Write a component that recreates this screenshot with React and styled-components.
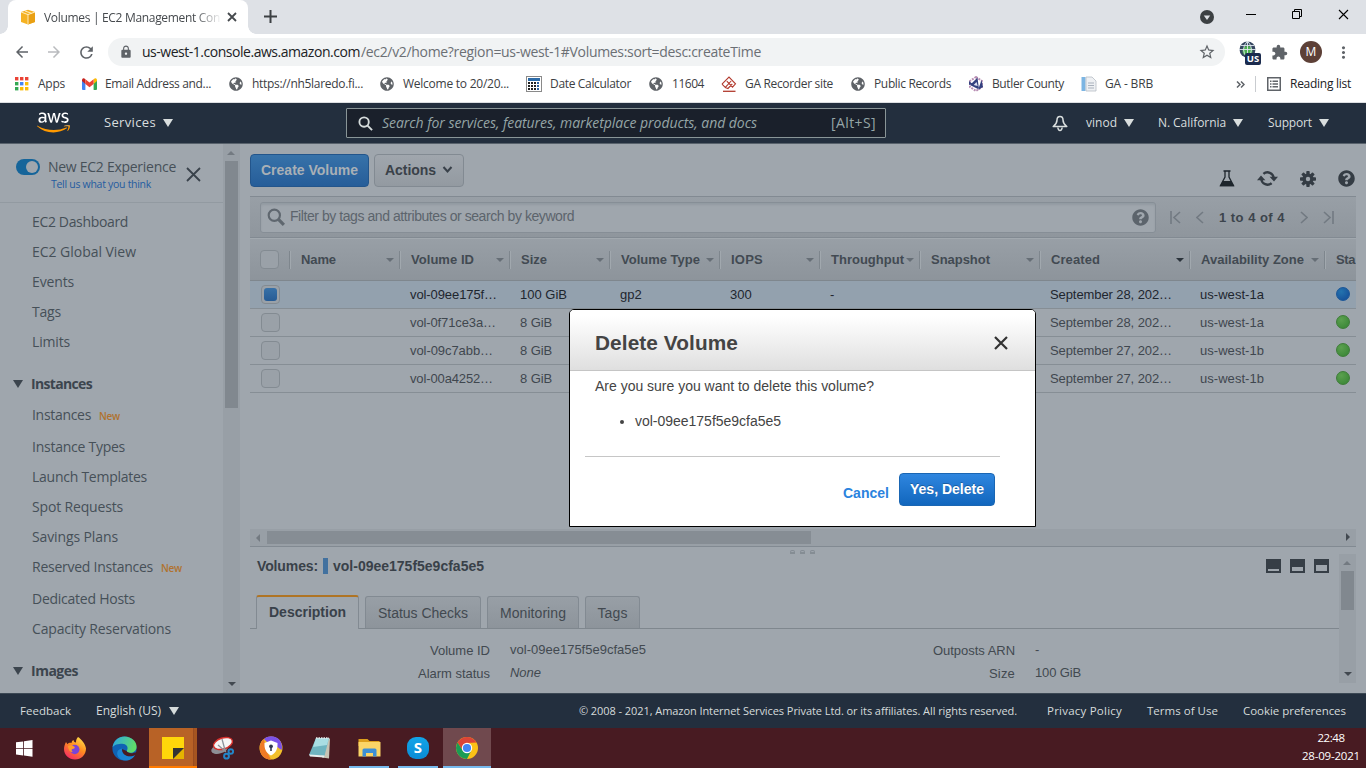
import React, { useLayoutEffect, useRef, useState } from "react";
import styled, { createGlobalStyle } from "styled-components";
import { MdArrowBack, MdArrowForward, MdRefresh, MdLock, MdStarBorder, MdExtension, MdMoreVert } from "react-icons/md";
import { FaAws, FaGlobeAmericas, FaQuestionCircle } from "react-icons/fa";

const ui = `"Open Sans", "Noto Sans", sans-serif`;
const arial = `"Liberation Sans", Arial, sans-serif`;

const Global = createGlobalStyle`
  * { box-sizing: border-box; }
  body { margin: 0; overflow: hidden; background: #9fa6ad; }
  svg { display: block; flex: none; }
`;

/* Label whose tracking is adjusted so that the text takes a given width. */
const LabelBox = styled.span`
  display: inline-block;
  flex: none;
  white-space: pre;
`;
function Label({ w, children, className }) {
  const ref = useRef(null);
  const [tracking, setTracking] = useState(0);
  useLayoutEffect(() => {
    const natural = ref.current.getBoundingClientRect().width;
    if (w) setTracking((w - natural) / String(children).length);
  }, []);
  return (
    <LabelBox ref={ref} className={className} style={{ letterSpacing: `${tracking}px` }}>
      {children}
    </LabelBox>
  );
}

const Screen = styled.div`
  width: 1366px;
  height: 768px;
  display: flex;
  flex-direction: column;
  overflow: hidden;
  position: relative;
`;

/* ---------- browser chrome ---------- */
const TabStrip = styled.div`
  height: 34px;
  flex: none;
  background: #dee1e6;
  display: flex;
  padding-left: 8px;
  font: 12px ${ui};
  color: #45494d;
`;
const Tab = styled.div`
  width: 240px;
  background: #fff;
  border-radius: 8px 8px 0 0;
  display: flex;
  align-items: center;
  padding: 0 9px 0 12px;
  position: relative;
  &::before, &::after {
    content: "";
    position: absolute;
    bottom: 0;
    width: 8px;
    height: 8px;
  }
  &::before { left: -8px; background: radial-gradient(circle at 0 0, #dee1e6 7.5px, #fff 8px); }
  &::after { right: -8px; background: radial-gradient(circle at 100% 0, #dee1e6 7.5px, #fff 8px); }
`;
const TabTitle = styled.div`
  width: 176px;
  margin: 0 7px 0 8px;
  overflow: hidden;
  mask-image: linear-gradient(90deg, #000 150px, transparent 178px);
`;
const NewTab = styled.div`
  padding: 10px 0 0 16px;
`;
const WindowControls = styled.div`
  margin-left: auto;
  display: flex;
  align-items: flex-start;
  padding-right: 17px;
`;
const ControlIcon = styled.div`
  margin-left: ${(p) => p.$gap}px;
  padding-top: ${(p) => p.$top}px;
`;

const Toolbar = styled.div`
  height: 36px;
  flex: none;
  background: #fff;
  display: flex;
  align-items: center;
  padding: 0 13px;
  color: #5f6368;
`;
const NavButtons = styled.div`
  display: flex;
  gap: 14px;
  width: 95px;
  & svg:nth-child(2) { color: #b9bbbe; }
`;
const Omnibox = styled.div`
  width: 1118px;
  height: 28px;
  border-radius: 14px;
  background: #f1f3f4;
  display: flex;
  align-items: center;
  padding: 0 9px 0 11px;
  font: 14px ${ui};
  & > svg:last-child { margin-left: auto; }
  & > span { padding-bottom: 2px; }
`;
const Host = styled(Label)`
  color: #202124;
  margin-left: 9px;
`;
const Path = styled(Label)`
  color: #6b6f74;
  margin-left: 1px;
`;
const Extensions = styled.div`
  display: flex;
  align-items: center;
  margin-left: 14px;
`;
const GlobeExt = styled.div`
  position: relative;
  width: 22px;
  height: 22px;
  margin-right: 10px;
`;
const GlobeBadge = styled.span`
  position: absolute;
  left: 6px;
  top: 12px;
  width: 16px;
  height: 12px;
  border-radius: 2px;
  background: #1b2b4e;
  color: #fff;
  text-align: center;
  font: bold 9.5px/12px ${ui};
`;
const Avatar = styled.div`
  width: 22px;
  height: 22px;
  border-radius: 50%;
  background: #5d4037;
  color: #fff;
  font: 12px/22px ${ui};
  text-align: center;
  margin: 0 12px 0 12px;
`;

const BookmarkBar = styled.div`
  height: 33px;
  flex: none;
  background: #fff;
  border-bottom: 1px solid #dcdfe2;
  display: flex;
  align-items: center;
  padding: 0 15px 4px 14px;
  font: 12px ${ui};
  color: #3c4043;
  & span { padding-bottom: 1px; }
`;
const Bookmark = styled.div`
  width: ${(p) => p.$w}px;
  display: flex;
  align-items: center;
  gap: 8px;
  flex: none;
`;
const BookmarkIcon = styled.div`
  width: 16px;
  height: 16px;
  display: flex;
  align-items: center;
  justify-content: center;
  color: #5f6368;
`;
const BookmarkEnd = styled.div`
  margin-left: auto;
  display: flex;
  align-items: center;
`;
const Divider = styled.div`
  width: 1px;
  height: 16px;
  background: #c9ccd0;
  margin: 0 11px 0 10px;
`;
const ReadingList = styled(Label)`
  color: #202124;
  margin-left: 9px;
`;

/* ---------- aws navigation ---------- */
const AwsNav = styled.div`
  height: 41px;
  flex: none;
  background: #232f3e;
  border-bottom: 1px solid #58626c;
  display: flex;
  align-items: center;
  padding-left: 37px;
  color: #d9dede;
  font: 500 12px ${ui};
`;
const LogoBox = styled.div`
  width: 34px;
  height: 28px;
  margin-right: 33px;
  display: grid;
  & > svg { grid-area: 1 / 1; width: 33px; height: 27px; color: #fff; clip-path: inset(0 0 39% 0); }
  & > svg:last-child { color: #ff9900; clip-path: inset(61% 0 0 0); }
`;
const NavItem = styled.div`
  display: flex;
  align-items: center;
  gap: ${(p) => p.$gap || 7}px;
  margin-right: ${(p) => p.$mr || 0}px;
  font-size: ${(p) => p.$size || 12}px;
  & > span { padding-bottom: 2px; }
`;
const Triangle = styled.i`
  border: solid transparent;
  border-width: ${(p) => p.$h || 8}px ${(p) => p.$w || 5}px 0;
  border-top-color: currentColor;
  flex: none;
`;
const AwsSearch = styled.div`
  width: 540px;
  height: 30px;
  margin-left: 173px;
  background: #1a202b;
  border: 1px solid #899597;
  border-radius: 1px;
  display: flex;
  align-items: center;
  padding: 0 9px 0 11px;
  font: 14px ${ui};
  color: #95a5a6;
  & > span { padding-bottom: 2px; }
`;
const Hint = styled(Label)`
  font-style: italic;
  margin-left: 9px;
`;
const Shortcut = styled(Label)`
  margin-left: auto;
`;
const NavRight = styled.div`
  margin-left: auto;
  padding-right: 37px;
  display: flex;
  align-items: center;
`;

/* ---------- workspace ---------- */
const Workspace = styled.div`
  height: 549px;
  flex: none;
  display: flex;
  background: #9fa6ad;
  color: #424950;
`;
const Sidebar = styled.div`
  width: 223px;
  flex: none;
  overflow: hidden;
  font: 14px ${ui};
  color: #465058;
`;
const Experience = styled.div`
  height: 59px;
  border-bottom: 1px solid #929aa1;
  display: flex;
  padding: 13px 0 0 16px;
`;
const Toggle = styled.div`
  width: 24px;
  height: 16px;
  border-radius: 8px;
  background: #16659a;
  padding: 2px;
  margin-top: 2px;
  &::after {
    content: "";
    display: block;
    width: 12px;
    height: 12px;
    margin-left: 8px;
    border-radius: 50%;
    background: #9fa6ad;
  }
`;
const ExperienceText = styled.div`
  display: flex;
  flex-direction: column;
  align-items: flex-start;
  margin-left: 8px;
  width: 138px;
  line-height: 20px;
`;
const Feedback = styled(Label)`
  font-size: 10.5px;
  line-height: 15px;
  color: #255ca0;
  margin-left: 3px;
`;
const SideList = styled.div`
  padding-top: 3px;
`;
const SideItem = styled.div`
  height: ${(p) => (p.$tall ? 32 : 30)}px;
  display: flex;
  align-items: center;
  padding: 0 0 ${(p) => (p.$tall ? 2 : 0)}px 32px;
`;
const SideNew = styled(Label)`
  color: #b0722f;
  font-size: 10px;
  font-weight: 600;
  margin: 3px 0 0 8px;
`;
const SideSection = styled.div`
  height: 43px;
  padding: 12px 0 0 13px;
  display: flex;
  align-items: center;
  gap: 8px;
  font-weight: 700;
  color: #3c454e;
`;
const VScroll = styled.div`
  width: 17px;
  flex: none;
  height: ${(p) => p.$h}px;
  background: #989fa6;
  display: flex;
  flex-direction: column;
  align-items: center;
`;
const VThumb = styled.div`
  width: 13px;
  height: ${(p) => p.$h}px;
  background: #81888f;
`;
const ScrollArrow = styled.div`
  width: 17px;
  height: 17px;
  display: flex;
  align-items: center;
  justify-content: center;
  margin-top: ${(p) => (p.$end ? "auto" : 0)};
  color: ${(p) => (p.$dim ? "#737a81" : "#424950")};
  transform: rotate(${(p) => p.$turn || 0}deg);
  ${(p) => (p.$end || p.$turn === 180) && "padding-bottom: 2px;"}
`;
const Main = styled.div`
  width: 1126px;
  padding: 0 10px;
  display: flex;
  flex-direction: column;
  font: 14px ${arial};
`;
const ActionBar = styled.div`
  height: 52px;
  flex: none;
  padding-top: 10px;
  display: flex;
  align-items: flex-start;
`;
const Button = styled.div`
  height: 33px;
  border-radius: 4px;
  display: flex;
  align-items: center;
  justify-content: center;
  width: ${(p) => p.$w}px;
  font: bold 14px ${arial};
  border: 1px solid #828a92;
  background: linear-gradient(#a0a6ad, #939aa1);
  color: #3a4149;
  margin-right: 5px;
  padding-bottom: 2px;
  gap: 6px;
`;
const CreateButton = styled(Button)`
  border-color: #23558b;
  background: linear-gradient(#3772a9, #265d99);
  color: #a9b0b6;
`;
const ActionIcons = styled.div`
  margin-left: auto;
  display: flex;
  align-items: center;
  padding: 16px 1px 0 0;
  & > * + * { margin-left: 22px; }
`;
const FilterBar = styled.div`
  height: 42px;
  flex: none;
  border-top: 1px solid #828a92;
  border-bottom: 1px solid #828a92;
  background: linear-gradient(#989fa6, #8f969d);
  display: flex;
  align-items: center;
  padding-left: 10px;
`;
const FilterField = styled.div`
  width: 896px;
  height: 31px;
  border: 1px solid #868e96;
  border-radius: 3px;
  background: #9fa6ad;
  box-shadow: inset 0 2px 2px rgba(60, 70, 80, 0.12);
  display: flex;
  align-items: center;
  padding: 0 6px;
  color: #5c646c;
  & > svg:last-child { margin-left: auto; }
  & span { padding-bottom: 2px; }
`;
const Pager = styled.div`
  display: flex;
  align-items: center;
  gap: 15px;
  margin-left: 14px;
  font-weight: bold;
  font-size: 13px;
  color: #3c444c;
`;
const HeadRow = styled.div`
  height: 43px;
  flex: none;
  border-top: 1px solid #a2a9af;
  border-bottom: 1px solid #7f878e;
  background: linear-gradient(#989fa6, #8d949b);
  display: flex;
  align-items: center;
  font: bold 13px ${arial};
  color: #424a52;
  overflow: hidden;
`;
const HeadCell = styled.div`
  width: ${(p) => p.$w}px;
  height: 18px;
  flex: none;
  display: flex;
  align-items: center;
  justify-content: space-between;
  padding: 0 5px 0 11px;
  border-left: 1px solid #7e868d;
  box-shadow: inset 1px 0 #a1a8ae;
  & i { color: ${(p) => (p.$on ? "#2b333b" : "#666e76")}; margin-top: 1px; }
`;
const CheckCell = styled.div`
  width: ${(p) => p.$w || 40}px;
  flex: none;
  padding-left: ${(p) => p.$pl || 11}px;
`;
const Check = styled.div`
  width: 19px;
  height: 19px;
  border: 1px solid #838b92;
  border-radius: 4px;
  background: #9aa1a8;
  padding: 2px;
  &::after {
    content: "";
    display: ${(p) => (p.$on ? "block" : "none")};
    height: 13px;
    border-radius: 3px;
    background: linear-gradient(#3871a7, #265b95);
  }
`;
const Row = styled.div`
  height: 28px;
  flex: none;
  display: flex;
  align-items: center;
  border-bottom: 1px solid #868e95;
  background: ${(p) => (p.$on ? "#93a1ae" : "transparent")};
  color: ${(p) => (p.$on ? "#1e262e" : "#3f474f")};
  font-size: 13px;
  overflow: hidden;
`;
const Cell = styled.div`
  width: ${(p) => p.$w}px;
  flex: none;
  padding-left: 10px;
  white-space: pre;
`;
const Status = styled.div`
  width: 14px;
  height: 14px;
  border-radius: 50%;
  margin-top: -1px;
  background: ${(p) => (p.$blue ? "radial-gradient(circle at 35% 30%, #2473ae, #17549c 75%)" : "radial-gradient(circle at 35% 30%, #5ba04f, #3f8a3a 75%)")};
  border: 1px solid ${(p) => (p.$blue ? "#1b5798" : "#3d7c38")};
`;
const HScroll = styled.div`
  height: 18px;
  flex: none;
  margin-top: auto;
  border-bottom: 1px solid #828a92;
  background: #989fa6;
  display: flex;
  align-items: center;
`;
const HThumb = styled.div`
  width: 544px;
  height: 13px;
  background: #868d94;
  margin-right: auto;
`;
const Details = styled.div`
  height: 146px;
  flex: none;
  display: flex;
  position: relative;
`;
const Grip = styled.div`
  position: absolute;
  left: 540px;
  top: 3px;
  display: flex;
  gap: 5px;
  & i { width: 5px; height: 4px; border: 1px solid #858d94; border-bottom-width: 2px; border-radius: 2px 2px 0 0; }
`;
const DetailBody = styled.div`
  width: 1089px;
  padding-top: 7px;
`;
const DetailTitle = styled.div`
  display: flex;
  align-items: center;
  height: 24px;
  padding-left: 7px;
  font: bold 14px ${arial};
  color: #394149;
`;
const Mark = styled.div`
  width: 5px;
  height: 16px;
  background: #42719f;
  margin: 0 5px;
`;
const PaneIcons = styled.div`
  display: flex;
  gap: 9px;
  margin-left: auto;
  padding-right: 10px;
`;
const Pane = styled.div`
  width: 15px;
  height: 14px;
  border: 2px solid #363e46;
  border-top-width: ${(p) => p.$top}px;
`;
const Tabs = styled.div`
  display: flex;
  align-items: flex-end;
  height: 51px;
  padding: 0 0 0 6px;
  border-bottom: 1px solid #7f878e;
  gap: 6px;
`;
const DetailTab = styled.div`
  width: ${(p) => p.$w}px;
  height: 32px;
  border: 1px solid #828a92;
  border-bottom: 0;
  border-radius: 3px 3px 0 0;
  background: linear-gradient(#989fa6, #8d949b);
  display: flex;
  align-items: center;
  justify-content: center;
`;
const ActiveTab = styled(DetailTab)`
  height: 34px;
  margin-bottom: -1px;
  border-top: 2px solid #af7424;
  background: #9fa6ad;
  font-weight: bold;
  color: #39414a;
  padding-bottom: 2px;
`;
const FactColumn = styled.div`
  display: grid;
  grid-template-columns: ${(p) => p.$key}px 1fr;
  column-gap: 20px;
  grid-auto-rows: 23px;
  & > :nth-child(odd) { justify-self: end; padding-top: 1px; }
  & > :nth-child(even) { justify-self: start; }
  & > * { line-height: 18px; }
`;
const FactGrid = styled.div`
  display: flex;
  padding-top: 12px;
  font-size: 13px;
  & > :first-child { width: 505px; }
`;
const Italic = styled(Label)`
  font-style: italic;
`;

/* ---------- dialog ---------- */
const Dialog = styled.div`
  position: absolute;
  left: 569px;
  top: 309px;
  width: 467px;
  height: 218px;
  border: 1px solid #000;
  border-radius: 5px 5px 0 0;
  background: #fff;
  font: 14px ${arial};
  color: #444;
`;
const DialogHead = styled.div`
  height: 61px;
  border-bottom: 1px solid #c5c5c5;
  border-radius: 4px 4px 0 0;
  background: linear-gradient(#fff 10%, #dfdfdf);
  display: flex;
  align-items: center;
  justify-content: space-between;
  padding: 6px 27px 0 25px;
  font: bold 20.8px ${arial};
`;
const Question = styled.div`
  padding: 7px 0 0 25px;
  line-height: 16px;
`;
const Targets = styled.ul`
  margin: 0 35px 0 15px;
  padding: 19px 0 26px 50px;
  border-bottom: 1px solid #c6c6c6;
  line-height: 16px;
  height: 63px;
`;
const DialogButtons = styled.div`
  display: flex;
  justify-content: flex-end;
  align-items: center;
  padding: 16px 40px 0 0;
  font-weight: bold;
`;
const Cancel = styled(Label)`
  color: #2a83de;
  margin: 7px 10px 0 0;
`;
const Confirm = styled(Button)`
  border-color: #1a66b3;
  background: linear-gradient(#2f86df, #1166bd);
  color: #fff;
  margin: 0;
  text-shadow: 0 -1px 0 rgba(0, 0, 0, 0.25);
`;

/* ---------- footers ---------- */
const Footer = styled.div`
  height: 35px;
  flex: none;
  background: #232f3e;
  border-top: 1px solid #3c4854;
  display: flex;
  align-items: center;
  padding: 0 20px 0 20px;
  font: 500 11.5px ${ui};
  color: #d5dbdb;
  & > * { margin-right: 25px; }
  & > :last-child { margin-right: 0; }
  & > span { padding-bottom: 2px; }
`;
const Copyright = styled(Label)`
  && { margin: 0 30px 0 auto; }
  font-size: 11px;
  font-weight: 400;
`;
const Taskbar = styled.div`
  height: 40px;
  flex: none;
  background: #481b22;
  display: flex;
  gap: 1px;
`;
const Task = styled.div`
  width: 48px;
  height: 40px;
  display: flex;
  align-items: center;
  justify-content: center;
  position: relative;
  background: ${(p) => p.$bg || "transparent"};
  &:first-child { margin-right: 2px; }
  &::after {
    content: "";
    position: absolute;
    bottom: 0;
    left: ${(p) => p.$inset || 0}px;
    right: ${(p) => p.$inset || 0}px;
    height: 2px;
    background: ${(p) => p.$line || "transparent"};
  }
`;
const Clock = styled.div`
  margin-left: auto;
  padding: 1px 6px 0 0;
  display: flex;
  flex-direction: column;
  align-items: center;
  font: 11.5px/18px ${ui};
  color: #fff;
`;

/* ---------- drawings ---------- */
const Cross = ({ s, w = 1.6, c = "currentColor" }) => (
  <svg width={s} height={s} viewBox={`0 0 ${s} ${s}`}>
    <path d={`M1 1L${s - 1} ${s - 1}M${s - 1} 1L1 ${s - 1}`} stroke={c} strokeWidth={w} fill="none" />
  </svg>
);
const Cube = () => (
  <svg width="16" height="16" viewBox="0 0 16 16">
    <path d="M1 3L8 .8 15 3v10l-7 2.4L1 13z" fill="#f5b222" />
    <path d="M8 6v9.4l7-2.4V3z" fill="#e9a013" />
    <path d="M1 3l7 2.6L15 3M8 5.6v9.8M5 2l6.5 2.3" stroke="#fff3cf" strokeWidth=".9" fill="none" />
  </svg>
);
const AppsGrid = () => {
  const colors = ["#ea4335", "#ea4335", "#ea4335", "#34a853", "#4285f4", "#fbbc05", "#34a853", "#fbbc05", "#fbbc05"];
  return (
    <svg width="14" height="14" viewBox="0 0 14 14">
      {colors.map((c, i) => <rect key={i} x={(i % 3) * 5} y={Math.floor(i / 3) * 5} width="3.4" height="3.4" fill={c} />)}
    </svg>
  );
};
const Gmail = () => (
  <svg width="15" height="12" viewBox="0 0 15 12">
    <path d="M0 2v9q0 1 1 1h2.4V5z" fill="#4285f4" />
    <path d="M15 2v9q0 1-1 1h-2.4V5z" fill="#34a853" />
    <path d="M0 3V1.8Q.2 0 2 .3L3.4 1.3V6z" fill="#c5221f" />
    <path d="M15 3V1.8Q14.8 0 13 .3l-1.4 1V6z" fill="#fbbc04" />
    <path d="M3.4 1.3L7.5 4.5l4.1-3.2V6L7.5 9.2 3.4 6z" fill="#ea4335" />
  </svg>
);
const Calculator = () => (
  <svg width="16" height="16" viewBox="0 0 16 16">
    <rect x=".5" y=".5" width="15" height="15" fill="#fff" stroke="#8a8a8a" />
    <rect x="2" y="2" width="12" height="3" fill="#2c6ba8" />
    {[6, 9, 12].map((y) => [2, 5, 8, 11].map((x) => <rect key={`${x}-${y}`} x={x} y={y} width="2" height="2" fill={x > 10 ? "#2c5f9c" : "#222"} />))}
  </svg>
);
const Recorder = () => (
  <svg width="16" height="16" viewBox="0 0 16 16" fill="none" stroke="#b23a2e" strokeWidth="1.1">
    <path d="M1 8.200L8 1l6.500 6.800-3 3.400L5.800 5.200M1 8.200l3.300 3.200L10.200 5M4.300 11.400L7 12.500l4.300-4.600" />
    <path d="M2 15.300h12.500" strokeWidth="1.3" />
  </svg>
);
const County = () => (
  <svg width="16" height="16" viewBox="0 0 16 16" fill="none">
    <path d="M8 1l6 4v6l-6 4-6-4V5z" stroke="#b98fb4" strokeWidth="2" strokeDasharray="2 1" />
    <path d="M9.5 1.5L2 9l9 4.500zM1 5v4l3-1.500zM13.500 4l1.500 7-5 3z" fill="#34417f" />
    <path d="M8.500 6l-2.800 3 4 1z" fill="#dfe2f2" />
  </svg>
);
const PageIcon = () => (
  <svg width="16" height="16" viewBox="0 0 16 16">
    <rect width="4" height="14" x=".5" y="1" fill="#7cb5e3" />
    <path d="M5 1h6l4 4v10H5z" fill="#eef0f3" stroke="#b6bcc4" strokeWidth=".8" />
    <path d="M7 7h6M7 9.5h6M7 12h6" stroke="#aab2bd" />
  </svg>
);
const Magnifier = ({ s, w, c, flip }) => (
  <svg width={s} height={s} viewBox="0 0 16 16" fill="none" stroke={c} strokeWidth={w}>
    <circle cx="6.5" cy="6.5" r="5" /><path d="M10.2 10.2L15 15" strokeWidth={flip ? w * 1.5 : w} />
  </svg>
);
const Bell = () => (
  <svg width="16" height="17" viewBox="0 0 16 17" fill="none" stroke="#d9dede" strokeWidth="1.5" strokeLinejoin="round">
    <path d="M8 1.500C6 1.500 5 3 5 5 5 8 3.800 9.500 1.200 11.600h13.600C12.200 9.500 11 8 11 5c0-2-1-3.500-3-3.500z" />
    <path d="M5.800 12.500q.4 3 2.200 3t2.200-3" />
  </svg>
);
const Flask = () => (
  <svg width="16" height="17" viewBox="0 0 16 17">
    <path d="M4.500 1h7M6 1v6L1.500 15.500h13L10 7V1" fill="none" stroke="#1d252c" strokeWidth="1.300" />
    <path d="M4 11h8l3.200 5.200H.8z" fill="#1d252c" />
  </svg>
);
const Refresh = () => (
  <svg width="21" height="17" viewBox="0 0 21 17" fill="none" stroke="#343c44" strokeWidth="2.4">
    <path d="M4.300 9A6.200 6.200 0 0 0 14.600 13.100M16.700 8A6.200 6.200 0 0 0 6.400 3.900" />
    <path d="M0 10.200L4 5.600l4.400 4.600zM21 6.800l-4 4.600-4.400-4.600z" fill="#343c44" stroke="none" />
  </svg>
);
const Gear = () => (
  <svg width="16" height="16" viewBox="-8 -8 16 16" fill="#343c44">
    {[0, 45, 90, 135].map((a) => <rect key={a} x="-1.7" y="-8" width="3.4" height="16" rx=".8" transform={`rotate(${a})`} />)}
    <circle r="5.6" /><circle r="2.2" fill="#9fa6ad" />
  </svg>
);
const PageArrow = ({ bar, right }) => (
  <svg width={bar ? 11 : 8} height="13" viewBox={bar ? "0 0 11 13" : "0 0 8 13"} fill="none" stroke="#727a82" strokeWidth="1.6">
    <g transform={right ? `translate(${bar ? 11 : 8} 0) scale(-1 1)` : undefined}>
      {bar ? <path d="M1 0v13M10 1L4 6.5 10 12" /> : <path d="M7 1L1 6.5 7 12" />}
    </g>
  </svg>
);
const Windows = () => (
  <svg width="17" height="17" viewBox="0 0 17 17" fill="#fff">
    <path d="M0 2.3L7.2 1.4v6.5H0zM8 1.3L16.5 0v7.9H8zM0 8.7h7.2v6.7L0 14.4zM8 8.7h8.5v8L8 15.5z" />
  </svg>
);
const Firefox = () => (
  <svg width="24" height="24" viewBox="0 0 24 24">
    <defs><linearGradient id="ff" x1=".8" y1="0" x2=".2" y2="1"><stop offset="0" stopColor="#ffe14a" /><stop offset=".45" stopColor="#ff8b1f" /><stop offset="1" stopColor="#f5246a" /></linearGradient></defs>
    <path d="M15 1c3 2 7.500 6.500 8 11.500C23 19 18 23.500 12 23.500S1 19 1 13c0-3 1-5 2-7l1.500 2.200C5.500 7 7 6.500 8.500 7c0-1 .8-2.500 2-3 .2 1.500 1 2.500 2.500 2.500C13 4 13.500 2.500 15 1z" fill="url(#ff)" />
    <circle cx="11.800" cy="13.500" r="4.700" fill="#7a44d8" />
    <path d="M5 10c2-1.500 5-.8 6.500.7 1 1-.5 2-2 2.300-1.500.5-1 2 .3 2.500C8 17 5 14 5 10z" fill="#ff9a2b" />
  </svg>
);
const Edge = () => (
  <svg width="25" height="25" viewBox="0 0 24 24">
    <defs><linearGradient id="ed" x1="0" y1="0" x2="1" y2=".3"><stop offset="0" stopColor="#2aa4e8" /><stop offset="1" stopColor="#5fdc6a" /></linearGradient></defs>
    <circle cx="12" cy="12" r="11.600" fill="#0f62b4" />
    <path d="M.5 11C1.500 4.500 6 .4 12 .4c7 0 11.600 5 11.600 9.800 0 3.800-3 5.800-6 5.800-2.600 0-4-1-3.300-2 2-3.500-.8-6.500-4.500-6.500C6 7.500 2 8.500.5 11z" fill="url(#ed)" />
    <path d="M9.500 12c-.5 4 3 7.500 7.500 7.500 2 0 4-.6 5.300-1.500-2.500 5-9 7-13.500 4.500-5.500-3-5-9.500.7-10.500z" fill="#1a84d4" />
    <path d="M9.700 12.500c-.4 3.800 3 7 7.300 7 2.300 0 3.800-.5 5.300-1.500l1.700-3C20 17 15.500 17 14 14.500z" fill="#481b22" />
  </svg>
);
const StickyNote = () => (
  <svg width="22" height="22" viewBox="0 0 22 22"><path d="M0 0h22v11L11 22H0z" fill="#ffd60a" /><path d="M11 11h11v11H11z" fill="#e5b400" /><path d="M11 11h11L11 22z" fill="#333" /></svg>
);
const Snip = () => (
  <svg width="24" height="24" viewBox="0 0 24 24" fill="none">
    <ellipse cx="9.500" cy="13" rx="8.500" ry="4.500" fill="#8d8f96" transform="rotate(-15 9.500 13)" />
    <ellipse cx="13" cy="7.500" rx="9.800" ry="5.500" fill="#f5f5f5" stroke="#d7302c" strokeWidth="1.400" transform="rotate(-18 13 7.500)" />
    <path d="M12 3l3.500 13M8 9l8 7" stroke="#8c939b" strokeWidth="1.300" />
    <circle cx="16.500" cy="20.200" r="2.400" stroke="#2386c8" strokeWidth="2" /><circle cx="20.800" cy="15.500" r="2.300" stroke="#2386c8" strokeWidth="2" />
  </svg>
);
const Secure = () => (
  <svg width="24" height="24" viewBox="0 0 24 24">
    <circle cx="12" cy="12" r="11.500" fill="#f2c02b" />
    <path d="M5 3C9-1 17-.5 20.500 4c2.500 3 3 7 2 10L17 10 8 6z" fill="#7b52e8" />
    <path d="M5 3C-.5 7-.5 16 4 20.500c3 3 6 3 8 3L7 14z" fill="#ef7a26" />
    <path d="M12 4.500L18.500 7c.3 6-1.500 10-6.500 12.500C7 17 5.200 13 5.500 7z" fill="#fff" />
    <circle cx="12" cy="10.300" r="1.900" fill="#333a52" /><path d="M11.200 11h1.600v4h-1.600z" fill="#333a52" />
  </svg>
);
const Notepad = () => (
  <svg width="24" height="24" viewBox="0 0 24 24">
    <path d="M9 2l13 .5-1 20-7-1z" fill="#c7c3b4" /><path d="M8 2h13l-4.500 18L1 19z" fill="#6fb4c0" /><path d="M8 2h13l-2 7L5 11z" fill="#a9dde3" />
    <path d="M1 18.500l15.500 1-.5 2L2 20.500z" fill="#e9efef" /><path d="M8 2h13" stroke="#e8ecec" strokeWidth="1.500" strokeDasharray="1.500 1" />
  </svg>
);
const Folder = () => (
  <svg width="23" height="20" viewBox="0 0 23 20">
    <path d="M.5 1h9l2 2h10v5H.5z" fill="#dd9f1c" /><path d="M.5 4h22v14.500H.5z" fill="#fbd567" />
    <path d="M4.500 18.500V12q0-1.500 1.500-1.500h11q1.500 0 1.500 1.500v6.500H15V15H8v3.500z" fill="#3d8fd6" />
  </svg>
);
const SkypeIcon = styled.div`
  width: 22px;
  height: 22px;
  border-radius: 9px;
  background: linear-gradient(#12a5e8, #0a8bd6);
  color: #fff;
  font: bold 15px/21px ${ui};
  text-align: center;
`;
const Chrome = () => (
  <svg width="22" height="22" viewBox="-11 -11 22 22">
    <circle r="11" fill="#fbc116" />
    <path d="M-9.500 -5.500A11 11 0 0 1 9.500 -5.500L0 -5-4.300 2.500z" fill="#dc4437" />
    <path d="M-9.500 -5.500A11 11 0 0 0 0 11L4.300 2.500-4.300 2.500z" fill="#1a9c55" />
    <circle r="5.200" fill="#fff" /><circle r="4.100" fill="#4285f4" />
  </svg>
);

/* ---------- data ---------- */
const bookmarks = [
  ["Apps", 27, 67, <AppsGrid />],
  ["Email Address and...", 106, 147, <Gmail />],
  ["https://nh5laredo.fi...", 111, 151, <FaGlobeAmericas size={14} />],
  ["Welcome to 20/20...", 106, 147, <FaGlobeAmericas size={14} />],
  ["Date Calculator", 81, 122, <Calculator />],
  ["11604", 32, 73, <FaGlobeAmericas size={14} />],
  ["GA Recorder site", 88, 129, <Recorder />],
  ["Public Records", 77, 118, <FaGlobeAmericas size={14} />],
  ["Butler County", 72, 113, <County />],
  ["GA - BRB", 48, 90, <PageIcon />],
];
const menu = [
  ["EC2 Dashboard", 96], ["EC2 Global View", 104], ["Events", 42], ["Tags", 29], ["Limits", 38],
  ["Instances", 61, "section"],
  ["Instances", 59, "new"], ["Instance Types", 93], ["Launch Templates", 115], ["Spot Requests", 91],
  ["Savings Plans", 86], ["Reserved Instances", 121, "new"], ["Dedicated Hosts", 103], ["Capacity Reservations", 139],
  ["Images", 47, "section"],
];
const columns = [
  ["Name", 35, 110], ["Volume ID", 63, 110], ["Size", 26, 100], ["Volume Type", 79, 110], ["IOPS", 32, 100],
  ["Throughput", 73, 100], ["Snapshot", 59, 120], ["Created", 49, 150], ["Availability Zone", 103, 135],
];
const volumes = [
  ["vol-09ee175f…", 87, "100 GiB", 47, "gp2", "300", "-", "September 28, 202…", "us-west-1a"],
  ["vol-0f71ce3a…", 86, "8 GiB", 32, "", "", "", "September 28, 202…", "us-west-1a"],
  ["vol-09c7abb…", 83, "8 GiB", 32, "", "", "", "September 27, 202…", "us-west-1b"],
  ["vol-00a4252…", 83, "8 GiB", 32, "", "", "", "September 27, 202…", "us-west-1b"],
];

export default function App() {
  return (
    <Screen>
      <Global />
      <TabStrip>
        <Tab>
          <Cube />
          <TabTitle><Label w={176}>Volumes | EC2 Management Con</Label></TabTitle>
          <Cross s={10} w={1.8} />
        </Tab>
        <NewTab><svg width="13" height="13" viewBox="0 0 13 13"><path d="M6.500 0v13M0 6.500h13" stroke="#3c4043" strokeWidth="2" /></svg></NewTab>
        <WindowControls>
          <ControlIcon $top={10} $gap={0}><svg width="14" height="14" viewBox="0 0 14 14"><circle cx="7" cy="7" r="7" fill="#3c4043" /><path d="M3.800 5.500h6.400L7 10z" fill="#dee1e6" /></svg></ControlIcon>
          <ControlIcon $top={14} $gap={32}><svg width="10" height="1"><rect width="10" height="1" fill="#000" /></svg></ControlIcon>
          <ControlIcon $top={9} $gap={36}><svg width="10" height="10" viewBox="0 0 10 10" fill="none" stroke="#000"><path d="M.5 2.500h7v7h-7zM2.500 2.500v-2h7v7h-2" /></svg></ControlIcon>
          <ControlIcon $top={9} $gap={36}><Cross s={11} w={1.1} c="#000" /></ControlIcon>
        </WindowControls>
      </TabStrip>
      <Toolbar>
        <NavButtons><MdArrowBack size={18} /><MdArrowForward size={18} /><MdRefresh size={19} /></NavButtons>
        <Omnibox>
          <MdLock size={14} />
          <Host w={218}>us-west-1.console.aws.amazon.com</Host>
          <Path w={400}>/ec2/v2/home?region=us-west-1#Volumes:sort=desc:createTime</Path>
          <MdStarBorder size={18} />
        </Omnibox>
        <Extensions>
          <GlobeExt>
            <svg width="17" height="17" viewBox="0 0 17 17"><circle cx="8.500" cy="8.500" r="8" fill="#35465f" /><circle cx="8.500" cy="10" r="5" fill="#4caf50" /><path d="M8.500 0v17M0 8.500h17M2 4.500h13M8.500 0q-8 8.500 0 17M8.500 0q8 8.500 0 17" stroke="#dfe8ee" strokeWidth=".9" fill="none" /></svg>
            <GlobeBadge>US</GlobeBadge>
          </GlobeExt>
          <MdExtension size={17} />
        </Extensions>
        <Avatar>M</Avatar>
        <MdMoreVert size={19} />
      </Toolbar>
      <BookmarkBar>
        {bookmarks.map(([name, w, space, icon]) => (
          <Bookmark key={name} $w={space}><BookmarkIcon>{icon}</BookmarkIcon><Label w={w}>{name}</Label></Bookmark>
        ))}
        <BookmarkEnd>
          <svg width="9" height="7" viewBox="0 0 9 7" fill="none" stroke="#5f6368" strokeWidth="1.500"><path d="M1 .5l3 3-3 3M5 .5l3 3-3 3" /></svg>
          <Divider />
          <svg width="14" height="14" viewBox="0 0 14 14" fill="none" stroke="#5f6368" strokeWidth="1.500"><rect x=".75" y=".75" width="12.500" height="12.500" /><path d="M3 4.300h1.500M5.500 4.300H11M3 7h1.500M5.500 7H11M3 9.700h1.500M5.500 9.700H11" /></svg>
          <ReadingList w={61}>Reading list</ReadingList>
        </BookmarkEnd>
      </BookmarkBar>

      <AwsNav>
        <LogoBox><FaAws /><FaAws /></LogoBox>
        <NavItem $size={13}><Label w={52}>Services</Label><Triangle /></NavItem>
        <AwsSearch>
          <Magnifier s={15} w={2} c="#d5dbdb" />
          <Hint w={375}>Search for services, features, marketplace products, and docs</Hint>
          <Shortcut w={45}>[Alt+S]</Shortcut>
        </AwsSearch>
        <NavRight>
          <NavItem $mr={18}><Bell /></NavItem>
          <NavItem $mr={24}><Label w={31}>vinod</Label><Triangle /></NavItem>
          <NavItem $mr={25}><Label w={68}>N. California</Label><Triangle /></NavItem>
          <NavItem><Label w={44}>Support</Label><Triangle /></NavItem>
        </NavRight>
      </AwsNav>

      <Workspace>
        <Sidebar>
          <Experience>
            <Toggle />
            <ExperienceText>
              <Label w={128}>New EC2 Experience</Label>
              <Feedback w={100}>Tell us what you think</Feedback>
            </ExperienceText>
            <ControlIcon $top={10} $gap={0}><Cross s={15} w={1.8} c="#39424b" /></ControlIcon>
          </Experience>
          <SideList>
            {menu.map(([name, w, kind], i) =>
              kind === "section" ? (
                <SideSection key={i}><Triangle /><Label w={w}>{name}</Label></SideSection>
              ) : (
                <SideItem key={i} $tall={kind === "new"}>
                  <Label w={w}>{name}</Label>
                  {kind === "new" && <SideNew w={21}>New</SideNew>}
                </SideItem>
              )
            )}
          </SideList>
        </Sidebar>
        <VScroll $h={549}>
          <ScrollArrow $turn={180} $dim><Triangle $w={4} $h={4} /></ScrollArrow>
          <VThumb $h={247} />
          <ScrollArrow $end><Triangle $w={4} $h={4} /></ScrollArrow>
        </VScroll>
        <Main>
          <ActionBar>
            <CreateButton $w={119}><Label w={97}>Create Volume</Label></CreateButton>
            <Button $w={90}><Label w={51}>Actions</Label><svg width="11" height="8" viewBox="0 0 11 8"><path d="M1.500 1L5.500 5.500l4-4.500" fill="none" stroke="#39414a" strokeWidth="2" /></svg></Button>
            <ActionIcons>
              <Flask /><Refresh /><Gear /><FaQuestionCircle size={17} color="#343c44" />
            </ActionIcons>
          </ActionBar>
          <FilterBar>
            <FilterField>
              <Magnifier s={18} w={1.9} c="#5f676f" flip />
              <ControlIcon $gap={5} $top={0}><Label w={284}>Filter by tags and attributes or search by keyword</Label></ControlIcon>
              <FaQuestionCircle size={17} />
            </FilterField>
            <Pager>
              <PageArrow bar /><PageArrow /><Label w={66}>1 to 4 of 4</Label><PageArrow right /><PageArrow bar right />
            </Pager>
          </FilterBar>
          <HeadRow>
            <CheckCell $w={39} $pl={10}><Check /></CheckCell>
            {columns.map(([name, w, width]) => (
              <HeadCell key={name} $w={width} $on={name === "Created"}><Label w={w}>{name}</Label><Triangle $w={4} $h={4} /></HeadCell>
            ))}
            <HeadCell $w={32}><Label w={19}>Sta</Label></HeadCell>
          </HeadRow>
          {volumes.map((v, i) => (
            <Row key={v[0]} $on={i === 0}>
              <CheckCell><Check $on={i === 0} /></CheckCell>
              <Cell $w={110} />
              <Cell $w={110}><Label w={v[1]}>{v[0]}</Label></Cell>
              <Cell $w={100}><Label w={v[3]}>{v[2]}</Label></Cell>
              <Cell $w={110}>{v[4]}</Cell>
              <Cell $w={100}>{v[5]}</Cell>
              <Cell $w={100}>{v[6]}</Cell>
              <Cell $w={120} />
              <Cell $w={150}><Label w={122}>{v[7]}</Label></Cell>
              <Cell $w={136}><Label w={64}>{v[8]}</Label></Cell>
              <Cell $w={24}><Status $blue={i === 0} /></Cell>
            </Row>
          ))}
          <HScroll>
            <ScrollArrow $turn={90} $dim><Triangle $w={4} $h={4} /></ScrollArrow>
            <HThumb />
            <ScrollArrow $turn={-90}><Triangle $w={4} $h={4} /></ScrollArrow>
          </HScroll>
          <Details>
            <Grip><i /><i /><i /></Grip>
            <DetailBody>
              <DetailTitle>
                <Label w={61}>Volumes:</Label><Mark /><Label w={151}>vol-09ee175f5e9cfa5e5</Label>
                <PaneIcons><Pane $top={10} /><Pane $top={8} /><Pane $top={6} /></PaneIcons>
              </DetailTitle>
              <Tabs>
                <ActiveTab $w={103}><Label w={77}>Description</Label></ActiveTab>
                <DetailTab $w={116}><Label w={90}>Status Checks</Label></DetailTab>
                <DetailTab $w={92}><Label w={66}>Monitoring</Label></DetailTab>
                <DetailTab $w={55}><Label w={30}>Tags</Label></DetailTab>
              </Tabs>
              <FactGrid>
                <FactColumn $key={240}>
                  <Label w={60}>Volume ID</Label><Label w={136}>vol-09ee175f5e9cfa5e5</Label>
                  <Label w={72}>Alarm status</Label><Italic w={31}>None</Italic>
                </FactColumn>
                <FactColumn $key={260}>
                  <Label w={82}>Outposts ARN</Label><Label>-</Label>
                  <Label w={26}>Size</Label><Label w={46}>100 GiB</Label>
                </FactColumn>
              </FactGrid>
            </DetailBody>
            <ControlIcon $gap={0} $top={7}>
              <VScroll $h={129}>
                <ScrollArrow $turn={180} $dim><Triangle $w={4} $h={4} /></ScrollArrow>
                <VThumb $h={39} />
                <ScrollArrow $end><Triangle $w={4} $h={4} /></ScrollArrow>
              </VScroll>
            </ControlIcon>
          </Details>
        </Main>
      </Workspace>

      <Footer>
        <Label w={51}>Feedback</Label>
        <NavItem $gap={8}><Label w={65}>English (US)</Label><Triangle /></NavItem>
        <Copyright w={438}>© 2008 - 2021, Amazon Internet Services Private Ltd. or its affiliates. All rights reserved.</Copyright>
        <Label w={75}>Privacy Policy</Label>
        <Label w={71}>Terms of Use</Label>
        <Label w={103}>Cookie preferences</Label>
      </Footer>
      <Taskbar>
        <Task><Windows /></Task>
        <Task><Firefox /></Task>
        <Task><Edge /></Task>
        <Task $bg="linear-gradient(90deg, #b86226 44px, #8f4420 44px, #a65520 45px)" $line="#ff7a00"><StickyNote /></Task>
        <Task><Snip /></Task>
        <Task><Secure /></Task>
        <Task><Notepad /></Task>
        <Task $line="#76b9ed" $inset={4}><Folder /></Task>
        <Task $line="#76b9ed" $inset={4}><SkypeIcon>S</SkypeIcon></Task>
        <Task $bg="#70494e" $line="#76b9ed"><Chrome /></Task>
        <Clock><Label w={27}>22:48</Label><Label w={58}>28-09-2021</Label></Clock>
      </Taskbar>

      <Dialog>
        <DialogHead><Label w={143}>Delete Volume</Label><Cross s={14} w={2.2} c="#333" /></DialogHead>
        <Question><Label w={279}>Are you sure you want to delete this volume?</Label></Question>
        <Targets><li><Label w={146}>vol-09ee175f5e9cfa5e5</Label></li></Targets>
        <DialogButtons><Cancel w={46}>Cancel</Cancel><Confirm $w={96}><Label w={74}>Yes, Delete</Label></Confirm></DialogButtons>
      </Dialog>
    </Screen>
  );
}
